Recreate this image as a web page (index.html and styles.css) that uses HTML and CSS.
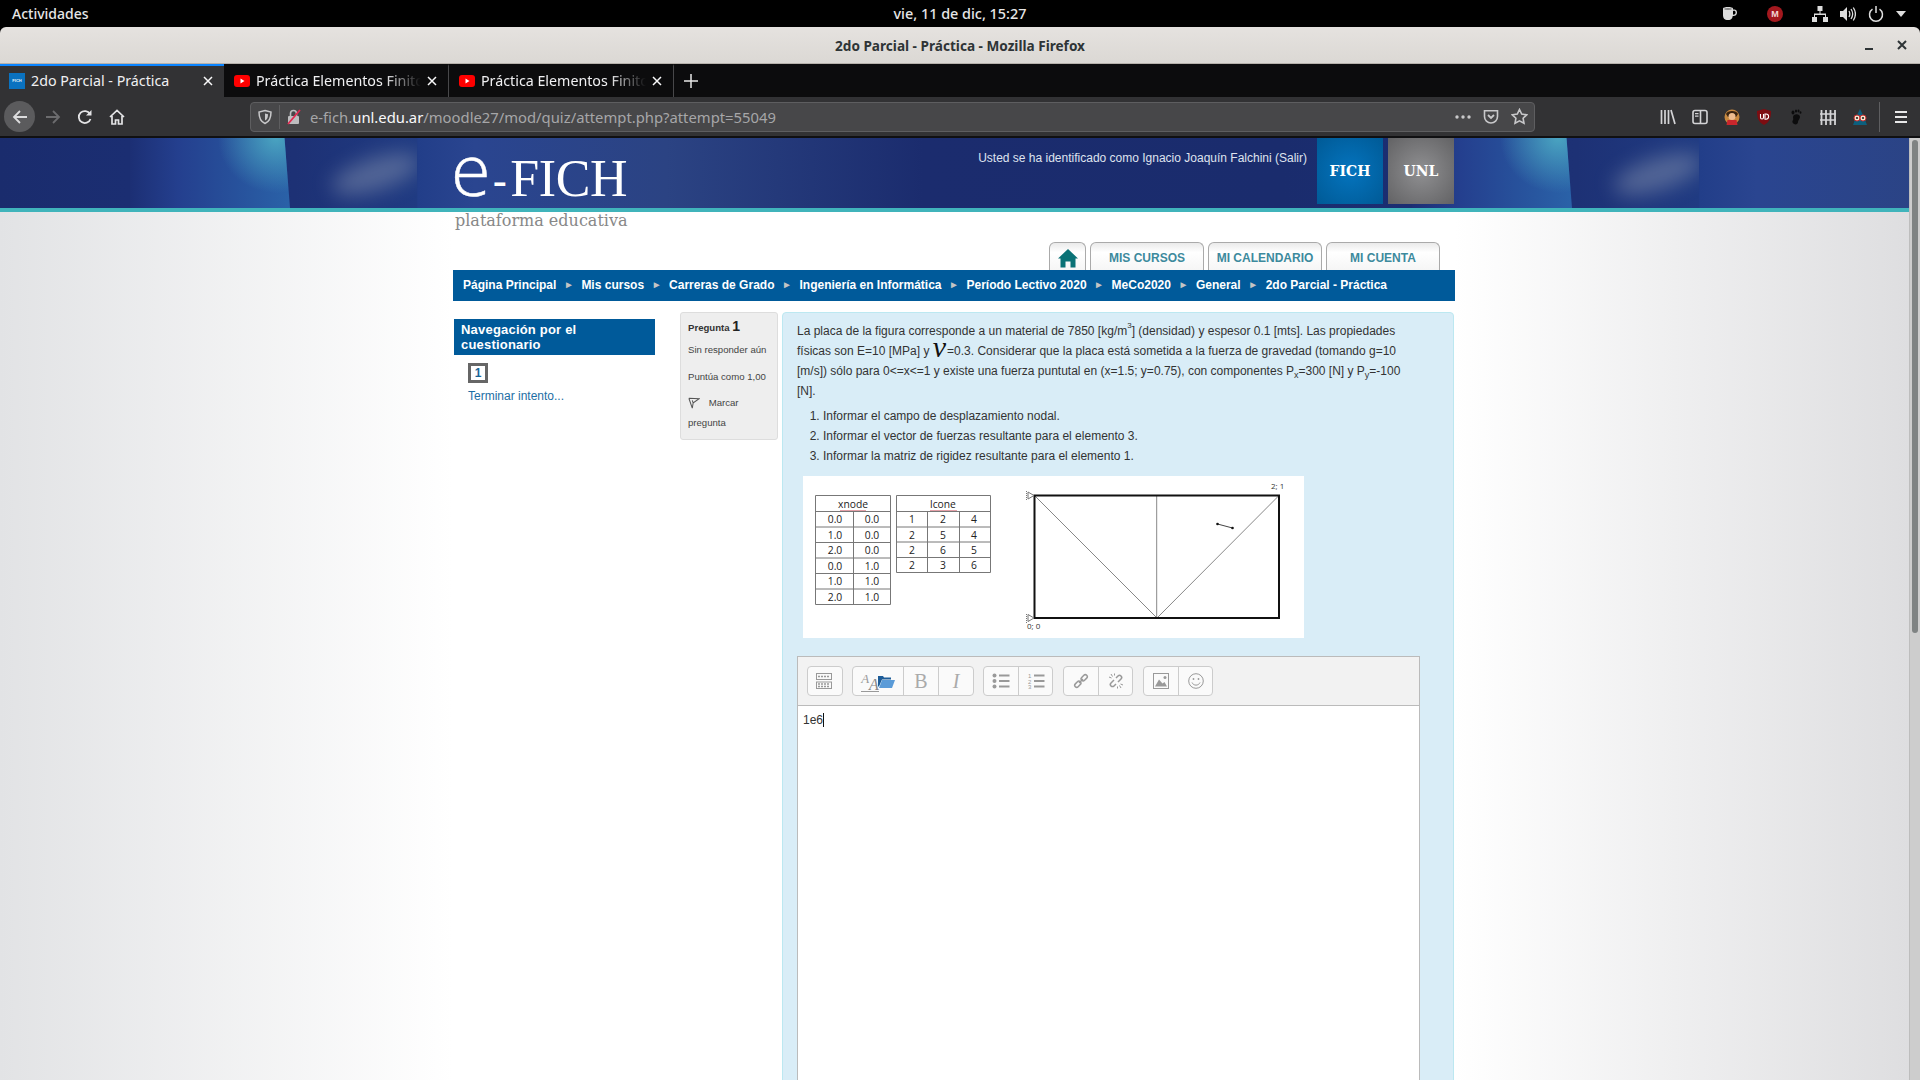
FILE: index.html
```html
<!DOCTYPE html>
<html lang="es">
<head>
    <meta charset="UTF-8">
    <title>2do Parcial - Práctica</title>
    <link rel="stylesheet" href="styles.css">
</head>
<body>
<div class="desktop">
    <!-- gnome top bar -->
    <div class="topbar">
        <div class="topbar-left">Actividades</div>
        <div class="topbar-clock">vie, 11 de dic, 15:27</div>
        <div class="tray">
            <svg class="tray-coffee" width="16" height="16" viewBox="0 0 16 16"><path fill="#ddd" d="M1 2.500c0-1 2.600-1.500 5-1.500s5 .5 5 1.500v1c2.500-.5 4 .5 4 3 0 2.800-2 3.800-4.300 3.500-.3 2-1 4-4.700 4s-5-2-5-5z"/><path fill="#000" d="M11 5v3.600c1.500.2 2.600-.4 2.600-2s-1-2-2.600-1.600z"/><ellipse cx="6" cy="3" rx="3.800" ry=".9" fill="#888"/></svg>
            <span class="tray-mega">M</span>
            <svg class="tray-net" width="16" height="16" viewBox="0 0 16 16"><path fill="#ddd" d="M5.500 0h5v5h-2v2.500h5.500v3.500h2v5h-5v-5h2v-2h-10v2h2v5h-5v-5h2v-3.500h5.500v-2.500h-2z"/></svg>
            <svg class="tray-vol" width="16" height="16" viewBox="0 0 16 16"><path fill="#ddd" d="M0 5h3l4-4v14l-4-4h-3z"/><path fill="none" stroke="#ddd" stroke-width="1.300" d="M9 5c1 1.800 1 4.200 0 6M11 3c2 3 2 7 0 10M13.300 1.500c2.600 4 2.600 9 0 13"/></svg>
            <svg class="tray-power" width="16" height="16" viewBox="0 0 16 16"><path fill="none" stroke="#ddd" stroke-width="1.500" d="M4.500 3.200a6.500 6.500 0 1 0 7 0M8 0v7"/></svg>
            <span class="tray-caret"></span>
        </div>
    </div>

    <div class="titlebar">
        <div class="title-text">2do Parcial - Práctica - Mozilla Firefox</div>
        <span class="win-min"></span>
        <svg class="win-close" width="10" height="10" viewBox="0 0 10 10"><path stroke="#2e3436" stroke-width="2" d="M1 1l8 8M9 1l-8 8"/></svg>
    </div>

    <div class="tabstrip">
        <div class="tab tab-active">
            <span class="fav-fich">FICH</span>
            <span class="tab-title">2do Parcial - Práctica</span>
            <svg class="tab-close" width="10" height="10" viewBox="0 0 10 10"><path stroke="#f9f9fa" stroke-width="1.500" d="M1 1l8 8M9 1l-8 8"/></svg>
        </div>
        <div class="tab">
            <svg class="fav-yt" width="16" height="16" viewBox="0 0 16 16"><rect y="2" width="16" height="12" rx="3" fill="#f00"/><path fill="#fff" d="M6.500 5.500v5l4-2.500z"/></svg>
            <span class="tab-title tab-fade">Práctica Elementos Finitos</span>
            <svg class="tab-close" width="10" height="10" viewBox="0 0 10 10"><path stroke="#f9f9fa" stroke-width="1.500" d="M1 1l8 8M9 1l-8 8"/></svg>
        </div>
        <div class="tab">
            <svg class="fav-yt" width="16" height="16" viewBox="0 0 16 16"><rect y="2" width="16" height="12" rx="3" fill="#f00"/><path fill="#fff" d="M6.500 5.500v5l4-2.500z"/></svg>
            <span class="tab-title tab-fade">Práctica Elementos Finitos</span>
            <svg class="tab-close" width="10" height="10" viewBox="0 0 10 10"><path stroke="#f9f9fa" stroke-width="1.500" d="M1 1l8 8M9 1l-8 8"/></svg>
        </div>
        <svg class="tab-new" width="14" height="14" viewBox="0 0 14 14"><path stroke="#e8e8e8" stroke-width="1.500" d="M7 0v14M0 7h14"/></svg>
    </div>

    <div class="navbar">
        <div class="nav-back">
            <svg width="16" height="16" viewBox="0 0 16 16"><path fill="none" stroke="#dcdcde" stroke-width="1.800" d="M15 8h-13M8 2l-6 6 6 6"/></svg>
        </div>
        <svg class="nav-forward" width="16" height="16" viewBox="0 0 16 16"><path fill="none" stroke="#6c6c6e" stroke-width="1.800" d="M1 8h13M8 2l6 6-6 6"/></svg>
        <svg class="nav-reload" width="16" height="16" viewBox="0 0 16 16"><path fill="none" stroke="#e4e4e6" stroke-width="1.800" d="M13.500 10a6 6 0 1 1-.5-5"/><path fill="#e4e4e6" d="M14.500 1v5.500h-5.500z"/></svg>
        <svg class="nav-home" width="16" height="16" viewBox="0 0 16 16"><path fill="none" stroke="#e4e4e6" stroke-width="1.700" d="M1 8l7-6.500 7 6.500M3 7v8h3.500v-4h3v4h3.500v-8"/></svg>

        <div class="urlbar">
            <svg class="url-shield" width="16" height="16" viewBox="0 0 16 16"><path fill="none" stroke="#c8c8ca" stroke-width="1.500" d="M8 1.500l6 1.500c0 5-1 9.500-6 11.500-5-2-6-6.500-6-11.500z"/><path fill="#c8c8ca" d="M8 4.500l3 .8c0 3-.5 5-3 6.200z"/></svg>
            <span class="url-sep"></span>
            <svg class="url-lock" width="16" height="16" viewBox="0 0 16 16"><rect x="2" y="7" width="11" height="8" rx="1" fill="#bdbdbf"/><path fill="none" stroke="#bdbdbf" stroke-width="1.600" d="M4.500 7v-2.500a3 3 0 0 1 6 0v2.500"/><path stroke="#e22850" stroke-width="1.800" d="M14 1l-12 14"/></svg>
            <span class="url-text">e-fich.<b>unl.edu.ar</b>/moodle27/mod/quiz/attempt.php?attempt=55049</span>
            <svg class="url-dots" width="16" height="16" viewBox="0 0 16 16"><g fill="#c8c8ca"><circle cx="2" cy="8" r="1.700"/><circle cx="8" cy="8" r="1.700"/><circle cx="14" cy="8" r="1.700"/></g></svg>
            <svg class="url-pocket" width="16" height="16" viewBox="0 0 16 16"><path fill="none" stroke="#c8c8ca" stroke-width="1.600" d="M1.500 1.800h13v5.700a6.500 6.500 0 0 1-13 0z"/><path fill="none" stroke="#c8c8ca" stroke-width="1.800" d="M5 6l3 3 3-3"/></svg>
            <svg class="url-star" width="17" height="17" viewBox="0 0 17 17"><path fill="none" stroke="#c8c8ca" stroke-width="1.600" d="M8.500 1.500l2.200 4.600 5 .7-3.600 3.500.9 5-4.500-2.400-4.500 2.400.9-5-3.600-3.500 5-.7z"/></svg>
        </div>

        <svg class="tool-first" width="16" height="16" viewBox="0 0 16 16"><path stroke="#d4d4d6" stroke-width="1.700" d="M1.500 1v14M5 1v14M8.500 1v14M11 1l4 14"/></svg>
        <svg class="tool" width="16" height="16" viewBox="0 0 16 16"><rect x="1" y="1.500" width="14" height="13" rx="2" fill="none" stroke="#d4d4d6" stroke-width="1.600"/><path stroke="#d4d4d6" stroke-width="1.600" d="M8.500 1.500v13"/><path fill="#d4d4d6" d="M3 4h3.500v1.200h-3.500zM3 6.500h3.500v1.200h-3.500z"/></svg>
        <svg class="tool" width="16" height="16" viewBox="0 0 16 16"><circle cx="8" cy="8" r="7.500" fill="#c8893f"/><path fill="#3a2410" d="M2 5c1-4 11-4 12 0l-2 3-8 0z"/><circle cx="8" cy="7.500" r="3.500" fill="#eebd8f"/><path fill="#c9262c" d="M3.500 11h9l1 5h-11z"/></svg>
        <svg class="tool" width="16" height="16" viewBox="0 0 16 16"><path fill="#7d0d12" d="M8 0l7 2c0 6-1 11-7 14-6-3-7-8-7-14z"/><path fill="none" stroke="#fff" stroke-width="1.100" d="M4.500 5v3.500a1.500 1.500 0 0 0 3 0v-3.500M9 5v5.200h1a2.600 2.600 0 0 0 0-5.200z"/></svg>
        <svg class="tool" width="16" height="16" viewBox="0 0 16 16"><g fill="#0c0c0d"><path d="M6 6c2-1.500 6-1 6 2 0 2-2 3-2 5s-2 3-4 2-2-3-1-4-1-3 1-5z"/><ellipse cx="5" cy="3.500" rx="1.500" ry="2"/><ellipse cx="8" cy="2" rx="1.100" ry="1.600"/><ellipse cx="10.500" cy="2" rx="1" ry="1.400"/><ellipse cx="12.500" cy="3.500" rx=".9" ry="1.200"/></g></svg>
        <svg class="tool" width="16" height="16" viewBox="0 0 16 16"><path stroke="#d4d4d6" stroke-width="1.800" d="M1.500 1v15M6 1v15M10.500 1v15M15 1v15"/><path stroke="#d4d4d6" stroke-width="1.500" d="M0 5h16M0 11h16"/></svg>
        <svg class="tool" width="16" height="16" viewBox="0 0 16 16"><path fill="#0d5f7d" d="M8 0l4 8 3 8h-14l3-8z"/><circle cx="5" cy="9" r="3" fill="#f4e6d0" stroke="#c92b2b"/><circle cx="11" cy="9" r="3" fill="#f4e6d0" stroke="#c92b2b"/><circle cx="5" cy="9" r="1.100" fill="#222"/><circle cx="11" cy="9" r="1.100" fill="#222"/></svg>
        <span class="tool-sep"></span>
        <svg class="tool-menu" width="16" height="16" viewBox="0 0 16 16"><path stroke="#e8e8e8" stroke-width="2" d="M2 3h12M2 8h12M2 13h12"/></svg>
    </div>

    <div class="viewport">
        <div class="page">
            <header class="site-header">
                <svg class="header-art" width="1909" height="70" viewBox="0 0 1909 70">
                    <defs>
                        <linearGradient id="baseGrad">
                            <stop offset="0" stop-color="#1a2c6d"/>
                            <stop offset="0.1" stop-color="#1b2e72"/>
                            <stop offset="0.23" stop-color="#1d3175"/>
                            <stop offset="0.325" stop-color="#203b82"/>
                            <stop offset="0.326" stop-color="#223e89"/>
                            <stop offset="0.37" stop-color="#2a4590"/>
                            <stop offset="0.52" stop-color="#2b4383"/>
                            <stop offset="0.72" stop-color="#1b2c6e"/>
                            <stop offset="1" stop-color="#1a2c6d"/>
                        </linearGradient>
                        <linearGradient id="beamGrad">
                            <stop offset="0" stop-color="#1c2f74"/>
                            <stop offset="0.3" stop-color="#243f8e"/>
                            <stop offset="1" stop-color="#2a62a8"/>
                        </linearGradient>
                        <radialGradient id="beamGlow">
                            <stop offset="0" stop-color="#4ba7c2" stop-opacity="0.95"/>
                            <stop offset="1" stop-color="#4ba7c2" stop-opacity="0"/>
                        </radialGradient>
                        <filter id="soft" x="-50%" y="-100%" width="200%" height="300%"><feGaussianBlur stdDeviation="10"/></filter>
                        <clipPath id="blobClip"><rect x="290" y="0" width="127" height="70"/></clipPath>
                        <clipPath id="beamClip"><path d="M130 0h154.500l5.500 70h-160z"/></clipPath>
                        <g id="headerTile">
                            <rect width="1282" height="70" fill="url(#baseGrad)"/>
                            <g clip-path="url(#beamClip)">
                                <rect x="130" width="160" height="70" fill="url(#beamGrad)"/>
                                <ellipse cx="276" cy="0" rx="58" ry="55" fill="url(#beamGlow)"/>
                            </g>
                            <g clip-path="url(#blobClip)">
                                <ellipse cx="376" cy="36" rx="46" ry="16" fill="#7e8cab" opacity="0.55" filter="url(#soft)" transform="rotate(-18 376 36)"/>
                            </g>
                        </g>
                    </defs>
                    <use href="#headerTile"/>
                    <use href="#headerTile" x="1282"/>
                </svg>
                <div class="header-inner">
                    <a class="logo">
                        <span class="logo-name"><span class="logo-e">e</span><span class="logo-dash">-</span><span class="logo-fich">FICH</span></span>
                        <span class="logo-sub">plataforma educativa</span>
                    </a>
                    <div class="login-info">Usted se ha identificado como Ignacio Joaquín Falchini (Salir)</div>
                    <div class="brand brand-fich">FICH</div>
                    <div class="brand brand-unl">UNL</div>
                </div>
            </header>

            <div class="wrapper">
                <nav class="main-tabs">
                    <a class="main-tab tab-home">
                        <svg width="20" height="20" viewBox="0 0 20 20"><path fill="#0a7276" d="M10 1l10 9.500h-2.500v9h-5v-6h-5v6h-5v-9h-2.500z"/></svg>
                    </a>
                    <a class="main-tab">MIS CURSOS</a>
                    <a class="main-tab">MI CALENDARIO</a>
                    <a class="main-tab">MI CUENTA</a>
                </nav>

                <div class="breadcrumb">
                    <a>Página Principal</a><span class="sep">►</span>
                    <a>Mis cursos</a><span class="sep">►</span>
                    <a>Carreras de Grado</a><span class="sep">►</span>
                    <a>Ingeniería en Informática</a><span class="sep">►</span>
                    <a>Período Lectivo 2020</a><span class="sep">►</span>
                    <a>MeCo2020</a><span class="sep">►</span>
                    <a>General</a><span class="sep">►</span>
                    <a>2do Parcial - Práctica</a>
                </div>

                <div class="columns">
                    <aside class="quiz-nav">
                        <h3 class="block-title">Navegación por el cuestionario</h3>
                        <div class="block-body">
                            <a class="qn-button">1</a>
                            <a class="finish-link">Terminar intento...</a>
                        </div>
                    </aside>

                    <div class="q-info">
                        <div class="q-no">Pregunta <span class="q-num">1</span></div>
                        <div class="q-state">Sin responder aún</div>
                        <div class="q-grade">Puntúa como 1,00</div>
                        <div class="q-flag">
                            <svg width="12" height="14" viewBox="0 0 14 14"><path fill="none" stroke="#555" stroke-width="1.200" d="M1 1.500l12 .5-7 5-1 -3M1 1.500l4 11.500 1-6"/></svg>
                            <span>Marcar pregunta</span>
                        </div>
                    </div>

                    <section class="q-content">
                        <p class="q-text">La placa de la figura corresponde a un material de 7850 [kg/m<sup>3</sup>] (densidad) y espesor 0.1 [mts]. Las propiedades físicas son E=10 [MPa] y <i class="nu">ν</i>=0.3. Considerar que la placa está sometida a la fuerza de gravedad (tomando g=10 [m/s]) sólo para 0&lt;=x&lt;=1 y existe una fuerza puntutal en (x=1.5; y=0.75), con componentes P<sub>x</sub>=300 [N] y P<sub>y</sub>=-100 [N].</p>
                        <ol class="q-list">
                            <li>Informar el campo de desplazamiento nodal.</li>
                            <li>Informar el vector de fuerzas resultante para el elemento 3.</li>
                            <li>Informar la matriz de rigidez resultante para el elemento 1.</li>
                        </ol>

                        <svg class="q-figure" width="501" height="162" viewBox="0 0 501 162">
                            <rect width="501" height="162" fill="#fff"/>
                            <g fill="none" stroke="#777" stroke-width="1">
                                <path d="M12.500 19.500h75v109h-75zM12.500 35.500h75M12.500 51h75M12.500 66.500h75M12.500 82h75M12.500 97.500h75M12.500 113h75M50.500 35.500v93"/>
                                <path d="M93.500 19.500h94v77h-94zM93.500 35.500h94M93.500 51h94M93.500 66h94M93.500 81.500h94M124.500 35.500v61M156.500 35.500v61"/>
                            </g>
                            <path stroke="#e4a0a8" stroke-width="1" d="M37 34.500h26M127 34.500h27"/>
                            <g class="fig-text">
                                <text x="50" y="32" text-anchor="middle">xnode</text>
                                <text x="140" y="32" text-anchor="middle">lcone</text>
                                <text x="32" y="47" text-anchor="middle">0.0</text><text x="69" y="47" text-anchor="middle">0.0</text>
                                <text x="32" y="63" text-anchor="middle">1.0</text><text x="69" y="63" text-anchor="middle">0.0</text>
                                <text x="32" y="78" text-anchor="middle">2.0</text><text x="69" y="78" text-anchor="middle">0.0</text>
                                <text x="32" y="94" text-anchor="middle">0.0</text><text x="69" y="94" text-anchor="middle">1.0</text>
                                <text x="32" y="109" text-anchor="middle">1.0</text><text x="69" y="109" text-anchor="middle">1.0</text>
                                <text x="32" y="125" text-anchor="middle">2.0</text><text x="69" y="125" text-anchor="middle">1.0</text>
                                <text x="109" y="47" text-anchor="middle">1</text><text x="140" y="47" text-anchor="middle">2</text><text x="171" y="47" text-anchor="middle">4</text>
                                <text x="109" y="63" text-anchor="middle">2</text><text x="140" y="63" text-anchor="middle">5</text><text x="171" y="63" text-anchor="middle">4</text>
                                <text x="109" y="78" text-anchor="middle">2</text><text x="140" y="78" text-anchor="middle">6</text><text x="171" y="78" text-anchor="middle">5</text>
                                <text x="109" y="93" text-anchor="middle">2</text><text x="140" y="93" text-anchor="middle">3</text><text x="171" y="93" text-anchor="middle">6</text>
                            </g>
                            <path fill="none" stroke="#888" stroke-width="1" d="M231.500 19.500l122.500 122.500 122-122.500M353.700 19.500v122.500"/>
                            <rect x="231.500" y="19.500" width="244.500" height="122.500" fill="none" stroke="#111" stroke-width="2"/>
                            <path fill="#fff" stroke="#777" stroke-width="1" d="M225 16v7l6-3.500zM225 138.500v7l6-3.500z"/>
                            <path stroke="#777" stroke-width="1" stroke-dasharray="1 1" d="M223.500 15v9M223.500 138v9"/>
                            <path stroke="#444" stroke-width="1" d="M414.500 48l15 4"/>
                            <circle cx="414.500" cy="48" r="1.300" fill="#111"/><circle cx="429.500" cy="52" r="1.300" fill="#111"/>
                            <text class="fig-small" x="468" y="13">2; 1</text>
                            <text class="fig-small" x="224" y="153">0; 0</text>
                        </svg>

                        <div class="editor">
                            <div class="editor-toolbar">
                                <div class="tb-group">
                                    <button class="tb-btn">
                                        <svg width="18" height="16" viewBox="0 0 18 16"><g fill="none" stroke="#999"><rect x=".5" y=".5" width="15" height="6"/><rect x=".5" y="9" width="15" height="6.500"/></g><path stroke="#999" stroke-width="1.500" stroke-dasharray="2 1" d="M2 3.500h12M2 11h12M2 13.500h12"/></svg>
                                    </button>
                                </div>
                                <div class="tb-group tb-group-text">
                                    <button class="tb-btn tb-font">
                                        <span class="tb-aa"><span class="aa-small">A</span><span class="aa-big">A</span></span>
                                        <svg width="17" height="13" viewBox="0 0 17 13"><path fill="#1d5c98" d="M0 1h5l1 1.500h7v2h-9l-3 7h-1z"/><path fill="#5a9bd8" d="M4 5h13l-3 8h-13z"/></svg>
                                    </button>
                                    <button class="tb-btn tb-mid"><span class="tb-b">B</span></button>
                                    <button class="tb-btn tb-mid"><span class="tb-i">I</span></button>
                                </div>
                                <div class="tb-group">
                                    <button class="tb-btn">
                                        <svg width="18" height="16" viewBox="0 0 18 16"><g fill="#999"><circle cx="2.500" cy="2.500" r="2"/><circle cx="2.500" cy="8" r="2"/><circle cx="2.500" cy="13.500" r="2"/><rect x="7" y="1.500" width="10.500" height="2"/><rect x="7" y="7" width="10.500" height="2"/><rect x="7" y="12.500" width="10.500" height="2"/></g></svg>
                                    </button>
                                    <button class="tb-btn">
                                        <svg width="18" height="16" viewBox="0 0 18 16"><g fill="#999"><rect x="7" y="1.500" width="10.500" height="2"/><rect x="7" y="7" width="10.500" height="2"/><rect x="7" y="12.500" width="10.500" height="2"/></g><g class="tb-nums"><text x="1" y="5">1</text><text x="1" y="10.500">2</text><text x="1" y="16">3</text></g></svg>
                                    </button>
                                </div>
                                <div class="tb-group">
                                    <button class="tb-btn">
                                        <svg width="16" height="16" viewBox="0 0 16 16"><g fill="none" stroke="#999" stroke-width="1.500"><rect x="-3.500" y="-2" width="7" height="4" rx="2" transform="translate(4.800 11.200) rotate(-45)"/><rect x="-3.500" y="-2" width="7" height="4" rx="2" transform="translate(11.200 4.800) rotate(-45)"/><path d="M6 10l4-4"/></g></svg>
                                    </button>
                                    <button class="tb-btn">
                                        <svg width="16" height="16" viewBox="0 0 16 16"><g fill="none" stroke="#999" stroke-width="1.500"><path d="M6 7l-3 3a2 2 0 0 0 3 3l2-2M10 9l3-3a2 2 0 0 0-3-3l-2 2"/><path stroke-width="1" d="M3 1l1.500 2.500M1 4l2.500 1M13 15l-1.500-2.500M15 12l-2.500-1M6.500 .5v2M9.500 15.500v-2"/></g></svg>
                                    </button>
                                </div>
                                <div class="tb-group">
                                    <button class="tb-btn">
                                        <svg width="16" height="16" viewBox="0 0 16 16"><rect x=".5" y=".5" width="15" height="15" fill="none" stroke="#999"/><path fill="#999" d="M2 13.500l4-7 3.500 4 2-1.500 2.500 4.500z"/><circle cx="12" cy="4.500" r="1.500" fill="#999"/></svg>
                                    </button>
                                    <button class="tb-btn">
                                        <svg width="16" height="16" viewBox="0 0 16 16"><g fill="none" stroke="#999"><circle cx="8" cy="8" r="7.300"/><path d="M4 9.500c1.500 3.500 6.500 3.500 8 0"/></g><circle cx="5.500" cy="6" r=".9" fill="#999"/><circle cx="10.500" cy="6" r=".9" fill="#999"/></svg>
                                    </button>
                                </div>
                            </div>
                            <div class="editor-body">1e6<span class="caret"></span></div>
                        </div>
                    </section>
                </div>
            </div>
        </div>
        <div class="scrollbar"><div class="scroll-thumb"></div></div>
    </div>
</div>
</body>
</html>
```

FILE: styles.css
```css
:root {
    --moodle-blue: #005a9a;
    --chrome-dark: #323234;
    --ui-font: "Noto Sans", "Open Sans", sans-serif;
    --page-font: "Liberation Sans", Arial, sans-serif;
}

body {
    margin: 0;
    font-family: var(--page-font);
    background: #000;
}

.desktop {
    height: 100vh;
    display: flex;
    flex-direction: column;
    overflow: hidden;
}

/* gnome bar */
.topbar {
    height: 27px;
    flex-shrink: 0;
    background: #000;
    color: #e6e6e6;
    font: 500 14px var(--ui-font);
    display: grid;
    grid-template-columns: 1fr auto 1fr;
    align-items: center;
}

.topbar-left {
    padding-left: 12px;
}

.topbar-clock {
    font-size: 14.4px;
}

.tray {
    display: flex;
    align-items: center;
    justify-content: flex-end;
    padding-right: 14px;
}

.tray-mega {
    width: 16px;
    height: 16px;
    margin-left: 29px;
    border-radius: 50%;
    background: #a3181e;
    color: #f2d6d6;
    font: bold 9px/16px var(--page-font);
    text-align: center;
}

.tray-net {
    margin-left: 29px;
}

.tray-vol,
.tray-power,
.tray-caret {
    margin-left: 12px;
}

.tray-caret {
    width: 0;
    height: 0;
    border-left: 5px solid transparent;
    border-right: 5px solid transparent;
    border-top: 6px solid #ddd;
}

/* window title */
.titlebar {
    height: 36px;
    flex-shrink: 0;
    border-bottom: 1px solid #b6b1ab;
    border-radius: 6px 6px 0 0;
    background: linear-gradient(#e5e2df, #dbd8d4);
    display: flex;
    align-items: center;
    justify-content: flex-end;
    position: relative;
}

.title-text {
    position: absolute;
    left: 0;
    right: 0;
    top: 9px;
    text-align: center;
    font: bold 13.6px var(--ui-font);
    color: #2e3436;
}

.win-min {
    width: 8px;
    height: 2px;
    margin-top: 7px;
    background: #2e3436;
}

.win-close {
    margin-left: 24px;
    margin-right: 13px;
}

/* firefox tabs */
.tabstrip {
    height: 33px;
    flex-shrink: 0;
    background: #0c0c0d;
    display: flex;
    align-items: center;
}

.tab {
    width: 225px;
    height: 33px;
    box-sizing: border-box;
    padding: 0 11px 2px 10px;
    display: flex;
    align-items: center;
    gap: 6px;
    color: #f0f0f2;
    font: 14.25px var(--ui-font);
    border-right: 1px solid #48484a;
    border-top: 2px solid transparent;
}

.tab-active {
    width: 224px;
    padding-left: 9px;
    background: var(--chrome-dark);
    border-top-color: #0a84ff;
    border-right: none;
}

.tab-title {
    flex: 1;
    white-space: nowrap;
    overflow: hidden;
}

.tab-fade {
    -webkit-mask-image: linear-gradient(to right, #000 78%, transparent);
    mask-image: linear-gradient(to right, #000 78%, transparent);
}

.fav-fich {
    width: 16px;
    height: 16px;
    flex-shrink: 0;
    background: #0a72c0;
    color: #e8f2fa;
    font: bold 4px/16px var(--page-font);
    text-align: center;
}

.tab-new {
    margin-left: 10px;
}

/* firefox toolbar */
.navbar {
    height: 39px;
    flex-shrink: 0;
    background: var(--chrome-dark);
    border-bottom: 2px solid #101012;
    display: flex;
    align-items: center;
    padding-left: 4px;
}

.nav-back {
    width: 31px;
    height: 31px;
    border-radius: 50%;
    background: #5b5b5d;
    display: flex;
    align-items: center;
    justify-content: center;
}

.nav-forward {
    margin-left: 10px;
}

.nav-reload,
.nav-home {
    margin-left: 16px;
}

.urlbar {
    width: 1285px;
    height: 30px;
    box-sizing: border-box;
    margin-left: 125px;
    padding: 0 6px;
    background: #474749;
    border: 1px solid #5e5e60;
    border-radius: 4px;
    display: flex;
    align-items: center;
}

.url-sep {
    width: 1px;
    height: 24px;
    margin: 0 6px 0 6px;
    background: #5e5e60;
}

.url-text {
    flex: 1;
    margin-left: 8px;
    color: #a6a6a8;
    font: 14.8px var(--ui-font);
    white-space: nowrap;
}

.url-text b {
    font-weight: normal;
    color: #f9f9fa;
}

.url-pocket,
.url-star {
    margin-left: 12px;
}

.tool-first {
    margin-left: 125px;
}

.tool {
    margin-left: 16px;
}

.tool-sep {
    width: 1px;
    height: 30px;
    margin-left: 11px;
    background: #5e5e60;
}

.tool-menu {
    margin-left: 13px;
}

/* moodle page */
.viewport {
    flex: 1;
    display: flex;
    min-height: 0;
}

.page {
    width: 1909px;
    flex-shrink: 0;
    background: linear-gradient(to right, #e2e3e5 0, #fff 453px, #fff 1455px, #dedee0 1909px);
}

.scrollbar {
    flex: 1;
    background: #cdcdcd;
    border-left: 1px solid #bdbdbd;
}

.scroll-thumb {
    width: 6px;
    height: 493px;
    margin: 2px 0 0 2px;
    border-radius: 3px;
    background: #7f8383;
}

.site-header {
    height: 70px;
    border-bottom: 4px solid #40b4bb;
    position: relative;
}

.header-art {
    position: absolute;
    left: 0;
    top: 0;
}

.header-inner {
    width: 1002px;
    height: 70px;
    margin-left: 453px;
    position: relative;
    display: flex;
}

.logo {
    display: flex;
    flex-direction: column;
    margin-right: auto;
    height: 100px;
}

.logo-name {
    height: 74px;
    color: #fff;
    white-space: nowrap;
    display: flex;
    align-items: baseline;
    line-height: 61px;
}

.logo-e {
    font: 300 72px/61px "Open Sans", sans-serif;
    -webkit-text-stroke: .5px #fff;
    margin-left: -2px;
}

.logo-dash,
.logo-fich {
    font: 52px/61px "Liberation Serif", serif;
}

.logo-dash {
    margin-left: 2px;
    font-family: "Liberation Sans", sans-serif;
    font-size: 44px;
}

.logo-fich {
    margin-left: 3px;
    letter-spacing: -.4px;
}

.logo-sub {
    margin-left: 2px;
    color: #888;
    font: 16px/18px "DejaVu Serif", serif;
    white-space: nowrap;
}

.login-info {
    margin: 12px 10px 0 0;
    color: #dfe3ee;
    font-size: 12px;
    line-height: 16px;
}

.brand {
    width: 66px;
    height: 66px;
    margin-right: 5px;
    color: #fff;
    font: bold 14px/66px "DejaVu Serif", serif;
    text-align: center;
}

.brand-fich {
    background: radial-gradient(circle, #0474be, #005a96);
}

.brand-unl {
    margin-right: 1px;
    background: radial-gradient(circle, #909092, #626264);
}

.wrapper {
    width: 1002px;
    margin-left: 453px;
    background: #fff;
    height: 868px;
    overflow: hidden;
}

.main-tabs {
    display: flex;
    justify-content: flex-end;
    gap: 4px;
    padding: 30px 15px 0 0;
}

.main-tab {
    width: 114px;
    height: 28px;
    box-sizing: border-box;
    border: 1px solid #aaa;
    border-bottom: none;
    border-radius: 6px 6px 0 0;
    background: linear-gradient(#eaeaea, #fff 35%, #f6f6f6);
    color: #3d8a9d;
    font-size: 12px;
    font-weight: bold;
    line-height: 31px;
    text-align: center;
}

.tab-home {
    width: 37px;
    line-height: 0;
    padding-top: 5px;
}

.breadcrumb {
    height: 31px;
    box-sizing: border-box;
    padding: 0 0 2px 10px;
    background: var(--moodle-blue);
    color: #fff;
    font-size: 12px;
    font-weight: bold;
    display: flex;
    align-items: center;
    white-space: nowrap;
}

.sep {
    width: 25px;
    flex-shrink: 0;
    color: #c4c4c4;
    font-size: 10px;
    font-weight: normal;
    text-align: center;
}

.columns {
    display: flex;
    align-items: flex-start;
    padding-top: 11px;
}

.quiz-nav {
    width: 201px;
    margin: 7px 0 0 1px;
}

.block-title {
    margin: 0;
    padding: 3px 7px;
    height: 30px;
    background: var(--moodle-blue);
    color: #fff;
    font-size: 13px;
    font-weight: bold;
    line-height: 15px;
    letter-spacing: .2px;
}

.block-body {
    padding: 8px 14px;
}

.qn-button {
    display: block;
    width: 20px;
    height: 20px;
    box-sizing: border-box;
    border: 3px solid #666;
    color: #1a6496;
    font-size: 12px;
    font-weight: bold;
    line-height: 14px;
    text-align: center;
}

.finish-link {
    display: block;
    margin-top: 5px;
    color: #1c6ea4;
    font-size: 12px;
    line-height: 16px;
}

.q-info {
    width: 98px;
    height: 128px;
    box-sizing: border-box;
    margin-left: 25px;
    padding: 2px 7px;
    background: #eee;
    border: 1px solid #ddd;
    border-radius: 3px;
    color: #444;
    font-size: 9.6px;
}

.q-no {
    font-weight: bold;
    color: #333;
    line-height: 22px;
}

.q-num {
    font-size: 14px;
    color: #222;
}

.q-state {
    margin-top: 4px;
    line-height: 14px;
}

.q-grade {
    margin-top: 13px;
    line-height: 14px;
}

.q-flag {
    margin-top: 9px;
    line-height: 20px;
}

.q-flag svg {
    vertical-align: -4px;
    margin-right: 6px;
}

.q-content {
    width: 672px;
    height: 800px;
    box-sizing: border-box;
    margin-left: 4px;
    padding: 8px 14px;
    background: #d9edf7;
    border: 1px solid #bce8f1;
    border-radius: 4px;
    color: #333;
    font-size: 12px;
    line-height: 20px;
}

.q-text {
    margin: 0 0 5px;
    width: 620px;
}

.q-text sup,
.q-text sub {
    font-size: 9px;
    line-height: 0;
}

.q-text sup {
    font-size: 8px;
    vertical-align: 7px;
}

.nu {
    margin-right: 1px;
    font: italic 30px/0 "Liberation Serif", serif;
    vertical-align: -2px;
    color: #111;
}

.q-list {
    margin: 0 0 10px;
    padding-left: 26px;
}

.q-figure {
    display: block;
    margin-left: 6px;
}

.fig-text text {
    font: 10.3px "Open Sans", sans-serif;
    fill: #222;
}

.fig-small {
    font: 8px "Open Sans", sans-serif;
    fill: #333;
}

.editor {
    width: 623px;
    height: 500px;
    box-sizing: border-box;
    margin-top: 18px;
    background: #fff;
    border: 1px solid #bbb;
}

.editor-toolbar {
    height: 49px;
    box-sizing: border-box;
    padding: 9px 9px 0;
    background: #f2f2f2;
    border-bottom: 1px solid #bbb;
    display: flex;
    gap: 10px;
}

.tb-group {
    height: 30px;
    display: flex;
    box-sizing: border-box;
    border: 1px solid #ccc;
    border-radius: 4px;
    background: #fafafa;
}

.tb-group-text {
    margin: 0 -1px;
}

.tb-btn {
    width: 34px;
    height: 28px;
    padding: 0;
    border: none;
    border-left: 1px solid #ccc;
    background: none;
    display: flex;
    align-items: center;
    justify-content: center;
}

.tb-btn:first-child {
    border-left: none;
}

.tb-mid {
    width: 35px;
}

.tb-font {
    width: 50px;
}

.tb-aa {
    font: italic 13px/13px "Liberation Serif", serif;
    color: #999;
    display: flex;
    align-items: flex-end;
    border-bottom: 1px solid #999;
    margin-right: -1px;
    height: 20px;
}

.aa-small {
    font-size: 13px;
    margin-bottom: 6px;
}

.aa-big {
    font-size: 16px;
    color: #888;
}

.tb-b,
.tb-i {
    font: 20px "Liberation Serif", serif;
    color: #aaa;
}

.tb-i {
    font-style: italic;
}

.tb-nums text {
    font: 6px "Liberation Sans", sans-serif;
    fill: #999;
}

.editor-body {
    padding: 6px 5px;
    line-height: 16px;
    color: #333;
}

.caret {
    display: inline-block;
    width: 1px;
    height: 14px;
    vertical-align: -3px;
    background: #111;
}
```
